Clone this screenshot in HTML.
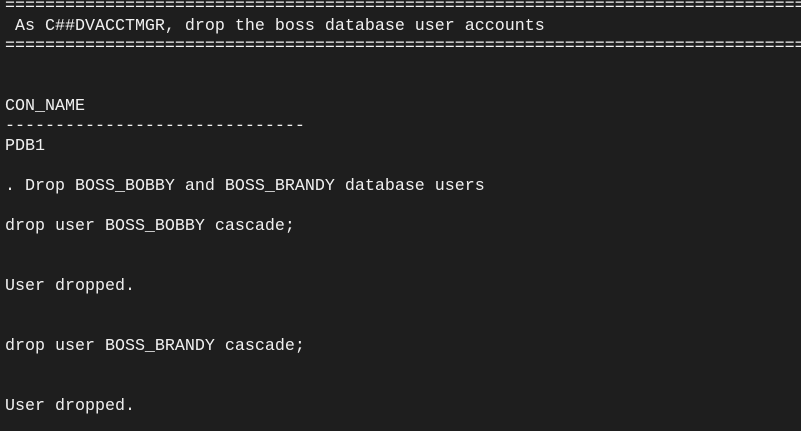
<!DOCTYPE html>
<html><head><style>
html,body{margin:0;padding:0;background:#1e1e1e;width:801px;height:431px;overflow:hidden}
pre{margin:0;position:absolute;left:5px;top:-3px;font-family:"Liberation Mono",monospace;font-size:16.67px;line-height:20px;color:#f0f0f0;white-space:pre}
</style></head><body><pre>================================================================================
 As C##DVACCTMGR, drop the boss database user accounts
================================================================================


CON_NAME
------------------------------
PDB1

. Drop BOSS_BOBBY and BOSS_BRANDY database users

drop user BOSS_BOBBY cascade;


User dropped.


drop user BOSS_BRANDY cascade;


User dropped.
</pre></body></html>
